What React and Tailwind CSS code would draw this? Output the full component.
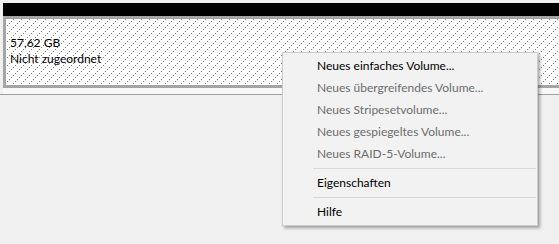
import React from 'react';

const menuItems = [
  { label: 'Neues einfaches Volume...', enabled: true },
  { label: 'Neues übergreifendes Volume...', enabled: false },
  { label: 'Neues Stripesetvolume...', enabled: false },
  { label: 'Neues gespiegeltes Volume...', enabled: false },
  { label: 'Neues RAID-5-Volume...', enabled: false },
  { separator: true },
  { label: 'Eigenschaften', enabled: true },
  { separator: true },
  { label: 'Hilfe', enabled: true },
];

function Hatch() {
  return (
    <svg className="absolute inset-0 w-full h-full" aria-hidden="true">
      <defs>
        <pattern id="hatch" width="8" height="8" patternUnits="userSpaceOnUse">
          <rect x="1" y="6" width="1" height="1" fill="#808080" />
          <rect x="3" y="4" width="1" height="1" fill="#808080" />
          <rect x="5" y="2" width="1" height="1" fill="#808080" />
          <rect x="7" y="0" width="1" height="1" fill="#808080" />
        </pattern>
      </defs>
      <rect width="100%" height="100%" fill="url(#hatch)" shapeRendering="crispEdges" />
    </svg>
  );
}

export default function App() {
  return (
    <div
      className="relative w-[559px] h-[244px] overflow-hidden bg-[#f0f0f0] text-[12px] text-black"
      style={{ fontFamily: 'Lato, "Segoe UI", sans-serif' }}
    >
      {/* Disk row */}
      <div className="pt-[3px]">
        <div className="pl-[3px]">
          <div className="h-[13px] bg-black" />
          <div className="relative h-[72px] border-[3px] border-r-0 border-[#a5a5a5] bg-white">
            <Hatch />
            <div className="relative pt-[16px] pl-[4px] leading-[16px]">
              <div>57,62 GB</div>
              <div>Nicht zugeordnet</div>
            </div>
          </div>
          <div className="h-[6px] bg-[#f8f8f8]" />
        </div>
        <div className="h-px bg-[#a0a0a0]" />
      </div>

      {/* Context menu */}
      <div className="absolute left-[282px] top-[52px] w-[256px] border border-[#cccccc] bg-[#f2f2f2] py-[2px] shadow-[2px_2px_3px_rgba(0,0,0,0.35)]">
        {menuItems.map((item, i) =>
          item.separator ? (
            <div key={i} className="py-[3px] ml-[30px] mr-[1px]">
              <div className="h-px bg-[#d7d7d7]" />
            </div>
          ) : (
            <div
              key={i}
              className={`h-[22px] flex items-center pl-[34px] ${
                item.enabled ? 'text-black' : 'text-[#6d6d6d]'
              }`}
            >
              {item.label}
            </div>
          )
        )}
      </div>
    </div>
  );
}
